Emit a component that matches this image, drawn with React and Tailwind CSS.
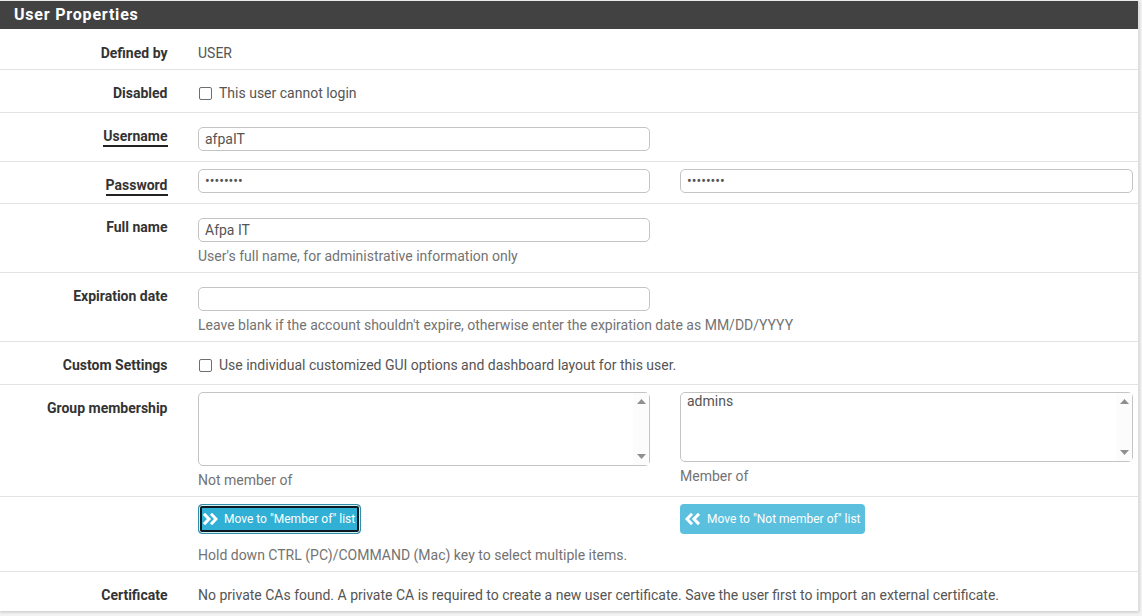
import React from "react";

const inputCls = "block w-full h-[24px] rounded-[5px] border border-[#c4c4c4] bg-white px-[6px] text-[14px] leading-[22px] text-[#555555] outline-none font-['Roboto',sans-serif]";

function Label({ children, pt, underline }) {
  return (
    <div className="w-[167.5px] shrink-0 flex justify-end items-start" style={{ paddingTop: pt }}>
      <span className={"text-[14px] font-bold text-[#333333] whitespace-nowrap " + (underline ? "border-b-2 border-[#222222] leading-[17px]" : "leading-[20px]")}>
        {children}
      </span>
    </div>
  );
}

function Row({ label, pt, underline, className, children }) {
  return (
    <div className={"flex border-b border-[#e3e3e3] " + className}>
      <Label pt={pt} underline={underline}>{label}</Label>
      <div className="ml-[30.5px] flex-1 min-w-0 pr-[5px]">{children}</div>
    </div>
  );
}

function Hint({ children, className = "" }) {
  return <div className={"text-[14px] leading-[20px] text-[#737373] whitespace-nowrap " + className}>{children}</div>;
}

function ListBox({ height, item }) {
  return (
    <div className="relative w-full rounded-[5px] border border-[#c4c4c4] bg-white" style={{ height }}>
      {item && <div className="pl-[6px] text-[14px] leading-[17px] text-[#555555]">{item}</div>}
      <div className="absolute right-0 top-0 bottom-0 w-[16px] flex flex-col items-center justify-between py-[6px] bg-[#fcfcfc]">
        <svg width="9" height="5" viewBox="0 0 9 5"><path d="M4.5 0L9 5H0z" fill="#8f8f8f" /></svg>
        <svg width="9" height="5" viewBox="0 0 9 5"><path d="M4.5 5L0 0h9z" fill="#8f8f8f" /></svg>
      </div>
    </div>
  );
}

function Check({ label }) {
  return (
    <label className="flex items-center text-[14px] leading-[20px] text-[#555555] whitespace-nowrap">
      <span className="ml-[1px] mr-[7px] block w-[13px] h-[13px] rounded-[2px] border border-[#6e6e6e] bg-white" />
      {label}
    </label>
  );
}

function Chevrons({ left, className }) {
  return (
    <svg width="15" height="12" viewBox="0 0 15 12" className={className} fill="none" stroke="white" strokeWidth="3">
      {left ? (
        <>
          <path d="M7 0.8L2 6l5 5.2" />
          <path d="M14 0.8L9 6l5 5.2" />
        </>
      ) : (
        <>
          <path d="M1 0.8l5 5.2-5 5.2" />
          <path d="M8 0.8l5 5.2-5 5.2" />
        </>
      )}
    </svg>
  );
}

export default function App() {
  return (
    <div className="h-[616px] w-[1142px] overflow-hidden bg-[#f2f2f2] font-['Roboto',sans-serif] pt-[1px]">
      <div className="w-[1139px] border-r border-[#dedede] bg-white shadow-[0_1px_3px_rgba(0,0,0,0.2)]">
        <div className="h-[28px] bg-[#424242] pl-[14px] text-[16px] leading-[28px] font-bold tracking-[0.8px] text-white">User Properties</div>

        <Row label="Defined by" pt={14} className="h-[41px]">
          <div className="pt-[14px] text-[14px] leading-[20px] text-[#555555]">USER</div>
        </Row>

        <Row label="Disabled" pt={13} className="h-[43px]">
          <div className="pt-[13px]"><Check label="This user cannot login" /></div>
        </Row>

        <Row label="Username" pt={15} underline className="h-[49px]">
          <div className="pt-[14px] w-[452px]"><input readOnly value="afpaIT" className={inputCls} /></div>
        </Row>

        <Row label="Password" pt={15} underline className="h-[42px]">
          <div className="pt-[7px] flex gap-[30px]">
            <div className="w-[452px]"><input readOnly type="password" value="abcdefgh" className={inputCls + " text-[12px]"} /></div>
            <div className="w-[453px]"><input readOnly type="password" value="abcdefgh" className={inputCls + " text-[12px]"} /></div>
          </div>
        </Row>

        <Row label="Full name" pt={13} className="h-[69px]">
          <div className="pt-[14px] w-[452px]"><input readOnly value="Afpa IT" className={inputCls} /></div>
          <Hint className="mt-[4px]">User's full name, for administrative information only</Hint>
        </Row>

        <Row label="Expiration date" pt={13} className="h-[69px]">
          <div className="pt-[14px] w-[452px]"><input readOnly value="" className={inputCls} /></div>
          <Hint className="mt-[4px]">Leave blank if the account shouldn't expire, otherwise enter the expiration date as MM/DD/YYYY</Hint>
        </Row>

        <Row label="Custom Settings" pt={13} className="h-[43px]">
          <div className="pt-[13px]"><Check label="Use individual customized GUI options and dashboard layout for this user." /></div>
        </Row>

        <Row label="Group membership" pt={13} className="h-[112px]">
          <div className="pt-[7px] flex gap-[30px]">
            <div className="w-[452px]">
              <ListBox height={74} />
              <Hint className="mt-[4px]">Not member of</Hint>
            </div>
            <div className="w-[453px]">
              <ListBox height={70} item="admins" />
              <Hint className="mt-[4px]">Member of</Hint>
            </div>
          </div>
        </Row>

        <Row label="" pt={0} className="h-[75px]">
          <div className="pt-[7px] flex gap-[30px]">
            <div className="w-[452px]">
              <button className="flex h-[30px] w-[163px] items-center rounded-[4px] border border-[#2f8fa8] bg-[#31b0d5] pl-[4px] text-[12px] text-white shadow-[inset_0_0_0_1px_#d5eef5,inset_0_0_0_3px_#0a1a20] whitespace-nowrap">
                <Chevrons className="mr-[6px] shrink-0" />
                Move to "Member of" list
              </button>
            </div>
            <div className="w-[453px]">
              <button className="flex h-[30px] w-[185px] items-center rounded-[4px] bg-[#5bc0de] pl-[5px] text-[12px] text-white whitespace-nowrap">
                <Chevrons left className="mr-[7px] shrink-0" />
                Move to "Not member of" list
              </button>
            </div>
          </div>
          <Hint className="mt-[11px]">Hold down CTRL (PC)/COMMAND (Mac) key to select multiple items.</Hint>
        </Row>

        <div className="flex h-[39px]">
          <Label pt={13}>Certificate</Label>
          <div className="ml-[30.5px] pt-[13px] text-[14px] leading-[20px] text-[#555555] whitespace-nowrap">
            No private CAs found. A private CA is required to create a new user certificate. Save the user first to import an external certificate.
          </div>
        </div>
      </div>
    </div>
  );
}
